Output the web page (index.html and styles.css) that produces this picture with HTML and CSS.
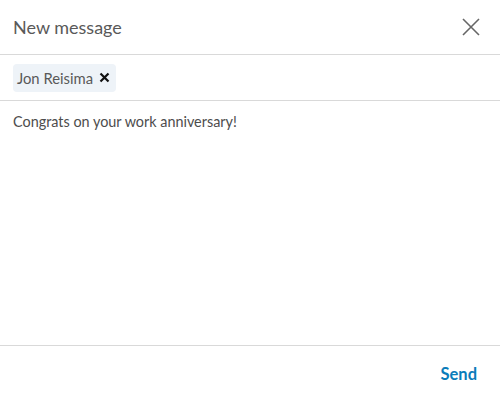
FILE: index.html
```html
<!DOCTYPE html>
<html lang="en">
<head>
    <meta charset="UTF-8">
    <title>New message</title>
    <link rel="stylesheet" href="styles.css">
</head>
<body>
    <div class="composer">
        <header class="composer-header">
            <h2>New message</h2>
            <button class="close-btn" aria-label="Close">
                <svg width="18" height="18" viewBox="0 0 18 18"><path d="M1 1L17 17M17 1L1 17" stroke="#666" stroke-width="1.6" fill="none"/></svg>
            </button>
        </header>
        <div class="recipients">
            <span class="chip">Jon Reisima
                <svg width="11" height="11" viewBox="0 0 11 11"><path d="M1.5 1.5L9.5 9.5M9.5 1.5L1.5 9.5" stroke="#111" stroke-width="2.2" fill="none"/></svg>
            </span>
        </div>
        <div class="body-text">Congrats on your work anniversary!</div>
        <footer class="composer-footer">
            <button class="send-btn">Send</button>
        </footer>
    </div>
</body>
</html>
```

FILE: styles.css
```css
body {
    margin: 0;
    font-family: 'Lato', 'Open Sans', sans-serif;
    background: #fff;
    color: #4d4d4d;
}

.composer {
    width: 500px;
    height: 401px;
    display: flex;
    flex-direction: column;
}

.composer-header {
    height: 55px;
    display: flex;
    align-items: center;
    justify-content: space-between;
    padding: 0 20px 0 13px;
    border-bottom: 1px solid #d9d9d9;
    box-sizing: border-box;
}

.composer-header h2 {
    margin: 0;
    font-size: 18px;
    font-weight: 400;
    color: #595959;
}

.close-btn {
    background: none;
    border: none;
    padding: 0;
    width: 18px;
    height: 18px;
    cursor: pointer;
}

.recipients {
    height: 45px;
    display: flex;
    align-items: center;
    padding: 0 13px;
    border-bottom: 1px solid #d9d9d9;
}

.chip {
    display: inline-flex;
    align-items: center;
    gap: 6px;
    height: 28px;
    padding: 0 6px 0 4px;
    background: #eef3f8;
    border-radius: 4px;
    font-size: 14.8px;
    color: #595959;
}

.body-text {
    flex: 1;
    padding: 12px 13px;
    font-size: 14.4px;
    color: #4d4d4d;
    border-bottom: 1px solid #d9d9d9;
}

.composer-footer {
    height: 55px;
    display: flex;
    align-items: center;
    justify-content: flex-end;
    padding: 0 23px;
}

.send-btn {
    background: none;
    border: none;
    padding: 0;
    font-family: inherit;
    font-size: 16.5px;
    font-weight: 700;
    color: #0a7cba;
    cursor: pointer;
}
```
